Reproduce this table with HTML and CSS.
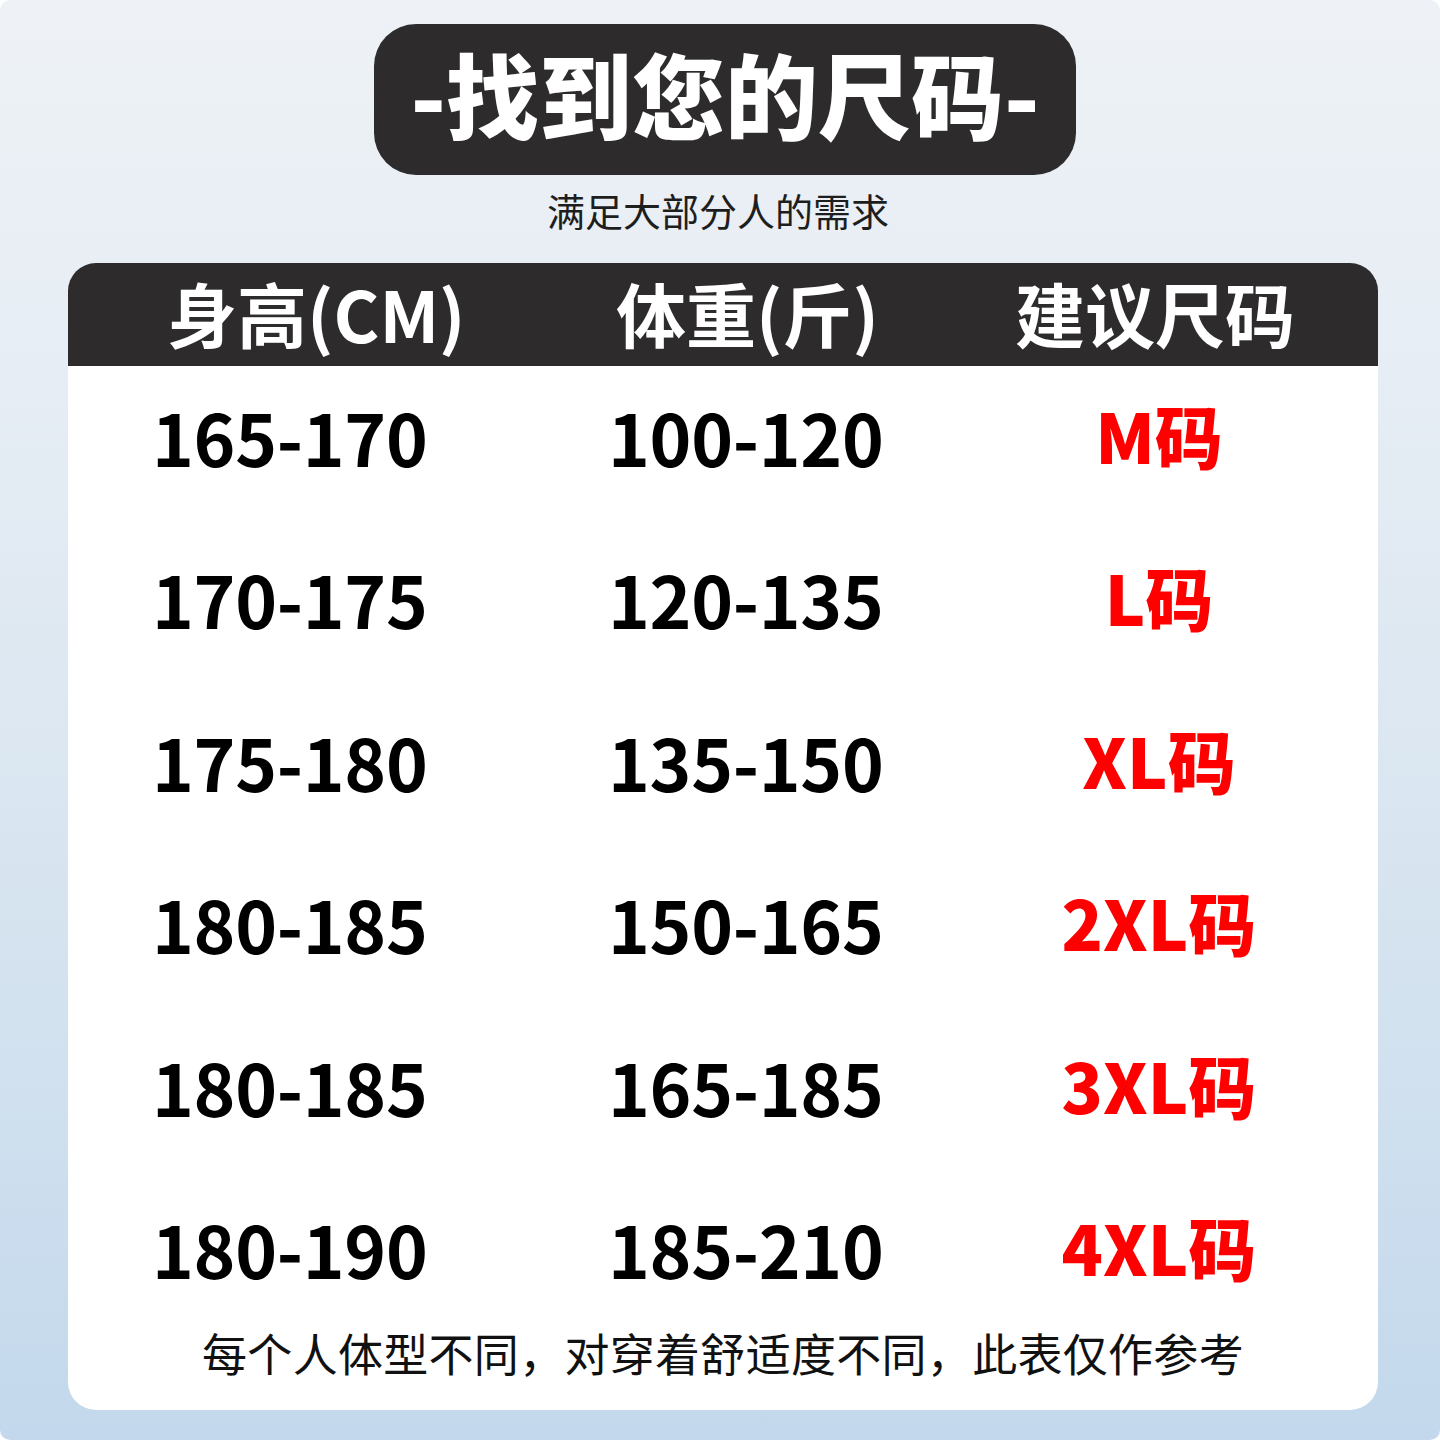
FILE: index.html
```html
<!DOCTYPE html>
<html lang="zh-CN">
<head>
<meta charset="utf-8">
<title>找到您的尺码</title>
<link rel="stylesheet" href="styles.css">
</head>
<body>
<div class="canvas">
  <div class="title-pill"><span class="title-text">-找到您的尺码-</span></div>
  <div class="subtitle">满足大部分人的需求</div>
  <div class="card">
    <div class="head">
      <div class="hc c1">身高(CM)</div>
      <div class="hc c2">体重(斤)</div>
      <div class="hc c3">建议尺码</div>
    </div>
    <div class="rows">
      <div class="row"><div class="num c1">165-170</div><div class="num c2">100-120</div><div class="size c3">M码</div></div>
      <div class="row"><div class="num c1">170-175</div><div class="num c2">120-135</div><div class="size c3">L码</div></div>
      <div class="row"><div class="num c1">175-180</div><div class="num c2">135-150</div><div class="size c3">XL码</div></div>
      <div class="row"><div class="num c1">180-185</div><div class="num c2">150-165</div><div class="size c3">2XL码</div></div>
      <div class="row"><div class="num c1">180-185</div><div class="num c2">165-185</div><div class="size c3">3XL码</div></div>
      <div class="row"><div class="num c1">180-190</div><div class="num c2">185-210</div><div class="size c3">4XL码</div></div>
    </div>
    <div class="note">每个人体型不同，对穿着舒适度不同，此表仅作参考</div>
  </div>
</div>
</body>
</html>
```

FILE: styles.css
```css
html, body {
  margin: 0;
  padding: 0;
  background: #ffffff;
}
body {
  font-family: "Noto Sans CJK SC", "Noto Sans", sans-serif;
}
.canvas {
  width: 1440px;
  height: 1440px;
  box-sizing: border-box;
  padding-top: 24px;
  border-radius: 10px;
  background: linear-gradient(180deg, #eef2f6 0%, #e3ebf3 35%, #d3e2ef 70%, #c3d8ec 100%);
  overflow: hidden;
}
.title-pill {
  width: 702px;
  height: 151px;
  box-sizing: border-box;
  padding-bottom: 14px;
  margin-left: 374px;
  background: #2d2b2c;
  border-radius: 42px;
  display: flex;
  align-items: center;
  justify-content: center;
}
.title-text {
  color: #ffffff;
  font-size: 93px;
  font-weight: 900;
  line-height: 1;
}
.subtitle {
  margin-top: 16px;
  text-align: center;
  font-size: 38px;
  line-height: 1;
  color: #1e1e1e;
  padding-right: 4px;
}
.card {
  margin-top: 34px;
  margin-left: 68px;
  width: 1310px;
  height: 1147px;
  background: #ffffff;
  border-radius: 28px;
  overflow: hidden;
}
.head {
  height: 103px;
  box-sizing: border-box;
  padding-bottom: 4px;
  background: #2d2b2c;
  display: grid;
  grid-template-columns: 470px 402px 1fr;
  align-items: center;
}
.hc {
  color: #ffffff;
  font-size: 70px;
  font-weight: 700;
  line-height: 1;
}
.head .c1 { padding-left: 99px; }
.head .c2 { padding-left: 78px; }
.head .c3 { text-align: center; padding-right: 8px; }
.rows {
  padding-top: 35px;
}
.row {
  height: 162.4px;
  display: grid;
  grid-template-columns: 470px 402px 1fr;
  align-items: start;
}
.num {
  font-size: 71px;
  font-weight: 700;
  line-height: 1;
  color: #000000;
  letter-spacing: -0.3px;
}
.row .c1 { padding-left: 84px; }
.row .c2 { padding-left: 70px; }
.size {
  text-align: center;
  font-size: 68px;
  font-weight: 900;
  line-height: 1;
  color: #ff0000;
}
.note {
  margin-top: -45px;
  text-align: center;
  font-size: 45px;
  line-height: 1;
  color: #111111;
  letter-spacing: 0.3px;
}
```
